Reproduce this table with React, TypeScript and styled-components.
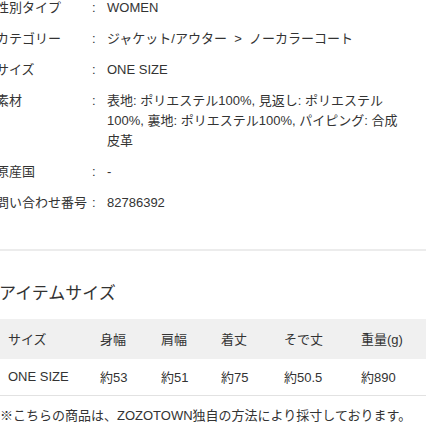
import styled, { createGlobalStyle } from "styled-components";

const GlobalStyle = createGlobalStyle`
  html, body {
    margin: 0;
    padding: 0;
    background: #fff;
    overflow: hidden;
  }
  body {
    font-family: "Liberation Sans", "Noto Sans CJK JP", sans-serif;
    color: #333;
    font-size: 13px;
  }
`;

const Page = styled.div`
  width: 426px;
  height: 426px;
  overflow: hidden;
  display: flex;
  flex-direction: column;
`;

const Spec = styled.dl`
  display: grid;
  grid-template-columns: 91px 16px 1fr;
  row-gap: 11px;
  margin: -2px 0 0 -4px;
  line-height: 20px;
`;

const Label = styled.dt`
  margin: 0;
  white-space: nowrap;
`;

const Colon = styled.span`
  padding-left: 5px;
`;

const Value = styled.dd`
  margin: 0;
  padding-left: 4px;
  white-space: pre;
`;

const Divider = styled.hr`
  border: none;
  height: 2px;
  background: #ececec;
  margin: 36px 0 0;
`;

const Heading = styled.h2`
  margin: 31px 0 0 -1px;
  font-size: 17px;
  font-weight: normal;
  line-height: 24px;
  white-space: nowrap;
`;

const SizeTable = styled.table`
  margin-top: 13px;
  border-collapse: collapse;
  table-layout: fixed;
  width: 440px;
  flex-shrink: 0;
`;

const HeadCell = styled.th<{ $w: number }>`
  box-sizing: border-box;
  width: ${(p) => p.$w}px;
  height: 40px;
  padding: 0 0 0 8px;
  background: #f0f0f0;
  text-align: left;
  font-weight: normal;
  white-space: nowrap;
`;

const Cell = styled.td`
  box-sizing: border-box;
  height: 37px;
  padding: 0 0 0 8px;
  border-bottom: 1px solid #e2e2e2;
  white-space: nowrap;
`;

const Note = styled.p`
  margin: 10px 0 0;
  line-height: 20px;
  white-space: nowrap;
`;

const specs: [string, React.ReactNode][] = [
  ["性別タイプ", "WOMEN"],
  ["カテゴリー", "ジャケット/アウター  >  ノーカラーコート"],
  ["サイズ", "ONE SIZE"],
  [
    "素材",
    <>
      表地: ポリエステル100%, 見返し: ポリエステル
      <br />
      100%, 裏地: ポリエステル100%, パイピング: 合成
      <br />
      皮革
    </>,
  ],
  ["原産国", "-"],
  ["問い合わせ番号", "82786392"],
];

const columns: [string, number][] = [
  ["サイズ", 92],
  ["身幅", 61],
  ["肩幅", 60],
  ["着丈", 63],
  ["そで丈", 77],
  ["重量(g)", 87],
];

const row = ["ONE SIZE", "約53", "約51", "約75", "約50.5", "約890"];

export default function App() {
  return (
    <Page>
      <GlobalStyle />
      <Spec>
        {specs.map(([k, v]) => [
          <Label key={k + "-k"}>{k}</Label>,
          <Colon key={k + "-c"}>:</Colon>,
          <Value key={k + "-v"}>{v}</Value>,
        ])}
      </Spec>
      <Divider />
      <Heading>アイテムサイズ</Heading>
      <SizeTable>
        <thead>
          <tr>
            {columns.map(([c, w]) => (
              <HeadCell key={c} $w={w}>
                {c}
              </HeadCell>
            ))}
          </tr>
        </thead>
        <tbody>
          <tr>
            {row.map((c) => (
              <Cell key={c}>{c}</Cell>
            ))}
          </tr>
        </tbody>
      </SizeTable>
      <Note>※こちらの商品は、ZOZOTOWN独自の方法により採寸しております。</Note>
    </Page>
  );
}
